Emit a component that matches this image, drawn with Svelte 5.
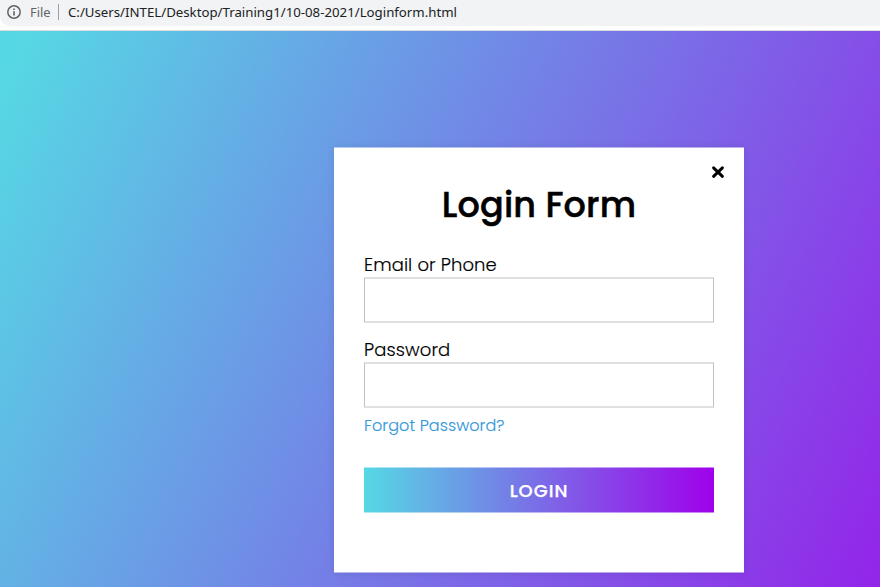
<script>
  const fields = [
    { id: 'email', label: 'Email or Phone', type: 'text' },
    { id: 'password', label: 'Password', type: 'password' }
  ];
</script>

<div class="page">
  <header>
    <div class="address">
      <svg class="info" width="14" height="14" viewBox="0 0 14 14"><circle cx="7" cy="7" r="6.2" fill="none" stroke="#5f6368" stroke-width="1.5"/><path d="M7 6.2v4.2M7 3.5v1.6" stroke="#5f6368" stroke-width="1.6"/></svg>
      <svg class="scheme" width="22" height="20"><text x="0" y="14" textLength="20.5" lengthAdjust="spacingAndGlyphs">File</text></svg>
      <span class="divider"></span>
      <svg class="url" width="400" height="20"><text x="0" y="14" textLength="389" lengthAdjust="spacingAndGlyphs">C:/Users/INTEL/Desktop/Training1/10-08-2021/Loginform.html</text></svg>
    </div>
  </header>
  <main>
    <form class="card" onsubmit={(e) => e.preventDefault()}>
      <div class="top">
        <button type="button" class="close" aria-label="Close">
          <svg width="14" height="14" viewBox="0 0 14 14"><path d="M2.6 3.4l8.8 8.4M11.4 3.4l-8.8 8.4" stroke="#000" stroke-width="3" stroke-linecap="round"/></svg>
        </button>
      </div>
      <h1>Login Form</h1>
      {#each fields as f}
        <div class="field">
          <label for={f.id}>{f.label}</label>
          <input id={f.id} type={f.type} />
        </div>
      {/each}
      <a href="#forgot">Forgot Password?</a>
      <button class="login">LOGIN</button>
    </form>
  </main>
</div>

<style>
  * { box-sizing: border-box; }
  svg { display: block; }
  .page { width: 880px; height: 587px; overflow: hidden; display: flex; flex-direction: column; font-family: 'Noto Sans', 'Open Sans', sans-serif; }
  header { height: 31px; flex: none; background: #fff; border-bottom: 1px solid #dadce0; }
  .address { height: 26px; display: flex; align-items: flex-start; background: #f1f3f4; border-bottom-left-radius: 10px; padding: 3px 0 0 7px; }
  .info { margin-top: 2px; }
  .scheme { margin-left: 9px; font-size: 13px; fill: #5f6368; }
  .divider { width: 1px; height: 16px; margin: 1px 9px 0 6px; background: #9aa0a6; }
  .url { font-size: 13px; fill: #202124; }
  main { flex: 1; padding: 117px 0 0 334px; background: linear-gradient(115deg, #56d8e4 10%, #9f01ea 90%) -144px 0 / 1366px 657px no-repeat; }
  .card { width: 410px; height: 425px; padding: 0 30px; background: #fff; box-shadow: 0 0 8px rgba(0,0,0,.1); font-family: Poppins, sans-serif; transform: translateY(-0.5px); }
  .top { height: 31px; padding-top: 17px; display: flex; justify-content: flex-end; }
  .close { border: 0; padding: 0; background: none; height: 14px; margin-right: -11px; }
  h1 { margin: 0; height: 72px; font-size: 35px; font-weight: 500; line-height: 51px; text-align: center; letter-spacing: .15px; -webkit-text-stroke: .5px #000; }
  .field { height: 85px; }
  label { display: block; height: 27px; font-size: 18px; line-height: 27px; font-weight: 300; letter-spacing: .1px; -webkit-text-stroke: .15px #000; }
  input { display: block; width: 350px; height: 45px; border: 1px solid #c0c0c0; background: #fff; padding: 0 10px; outline: none; }
  a { display: block; height: 47px; margin-top: -7px; margin-bottom: 7px; font-size: 16px; line-height: 24px; font-weight: 300; letter-spacing: .08px; -webkit-text-stroke: .15px #3498db; color: #3498db; text-decoration: none; }
  .login { display: block; width: 350px; height: 45px; border: 0; padding: 0; background: linear-gradient(to right, #56d8e4, #9f01ea); color: #fff; font: 500 18px Poppins, sans-serif; letter-spacing: 1px; -webkit-text-stroke: .25px #fff; }
</style>
